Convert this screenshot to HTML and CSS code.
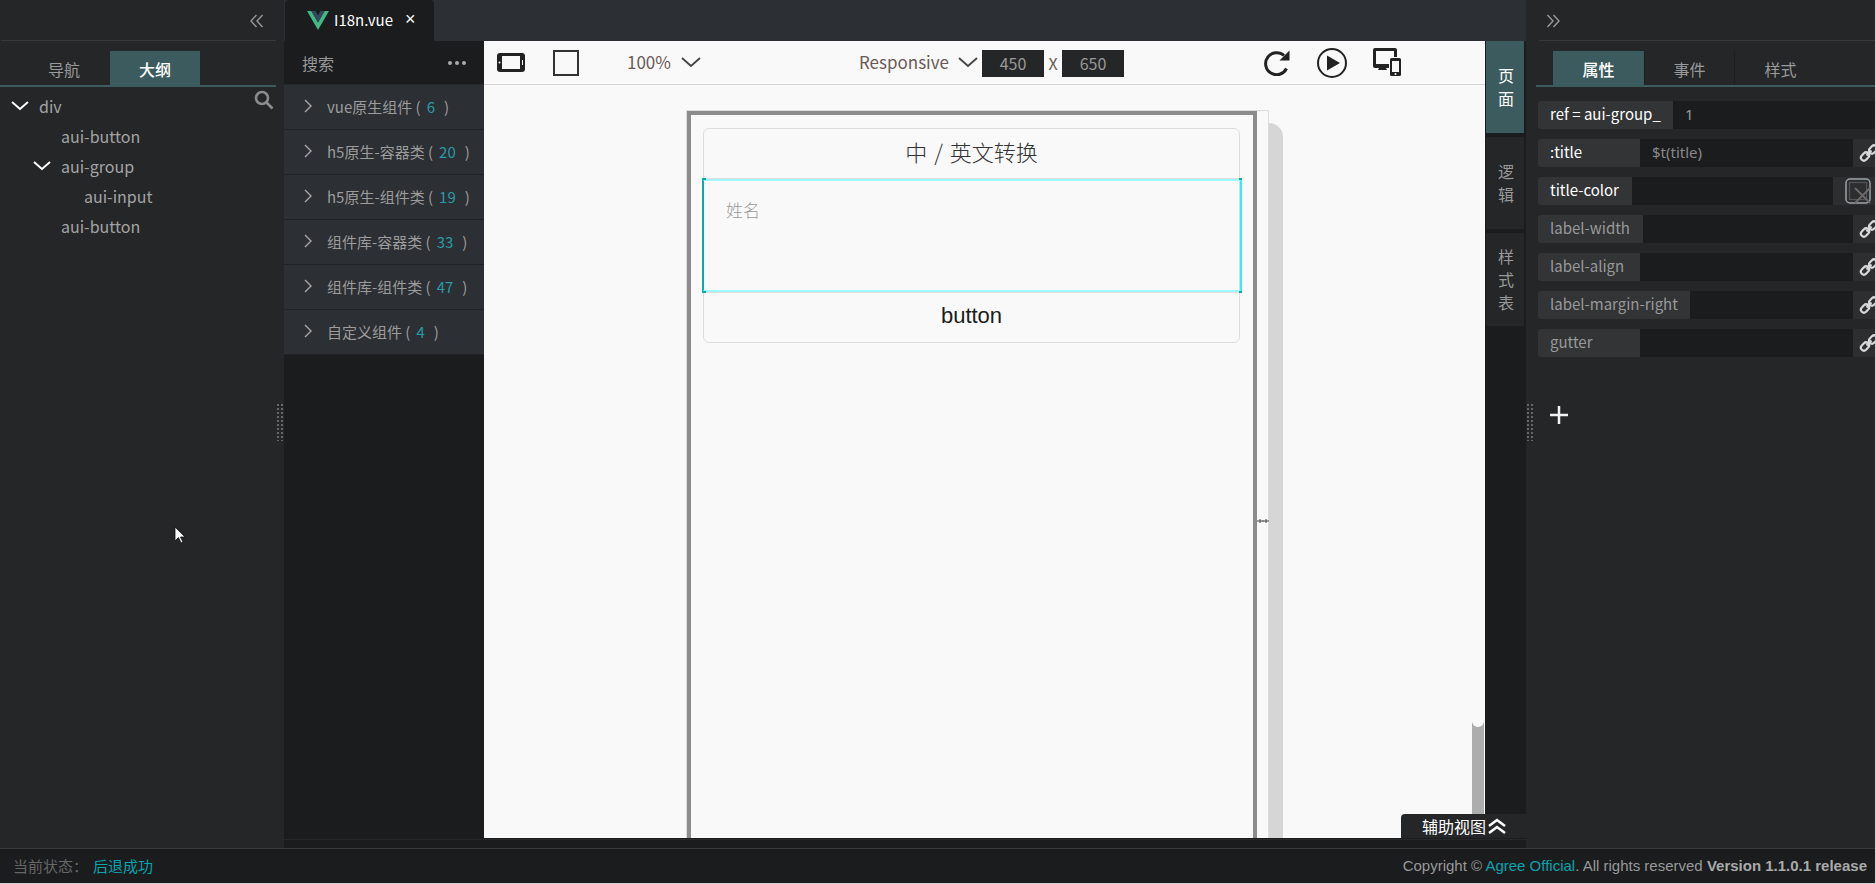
FILE: index.html
```html
<!DOCTYPE html>
<html lang="zh">
<head>
<meta charset="utf-8">
<title>I18n.vue</title>
<link rel="stylesheet" href="styles.css">
</head>
<body>
<div class="app">
  <div class="workspace">
    <aside class="left">
      <div class="panel-head"><svg class="collapse" viewBox="0 0 14 14"><path d="M6.5 1 1 7l5.500 6M12.500 1 7 7l5.500 6"/></svg></div>
      <div class="tabs">
        <div class="tab first">导航</div>
        <div class="tab active">大纲</div>
      </div>
      <div class="tree">
        <svg class="search" viewBox="0 0 20 20"><circle cx="8" cy="8" r="6"/><path d="m12.500 12.500 6 6"/></svg>
        <div class="node lvl0"><svg class="caret" viewBox="0 0 18 10"><path d="m1 1 8 7 8-7"/></svg>div</div>
        <div class="node lvl1">aui-button</div>
        <div class="node lvl1b"><svg class="caret" viewBox="0 0 18 10"><path d="m1 1 8 7 8-7"/></svg>aui-group</div>
        <div class="node lvl2">aui-input</div>
        <div class="node lvl1">aui-button</div>
      </div>
      <div class="grip"></div>
      <svg class="cursor" viewBox="0 0 12 18"><path d="M1 1v14l3.500-3.500 2.500 5.500 2-1-2.500-5H11Z"/></svg>
    </aside>

    <main class="center">
      <div class="tabbar">
        <div class="filetab">
          <svg class="vue" viewBox="0 0 256 221"><path fill="#41b883" d="M0 0l128 220.800L256 0h-51.200L128 132.480 50.560 0H0Z"/><path fill="#35495e" d="M50.560 0 128 133.120 204.800 0h-47.360L128 51.200 97.920 0H50.560Z"/></svg>
          <span class="filename">I18n.vue</span>
          <span class="close">×</span>
        </div>
      </div>
      <div class="body">
        <section class="library">
          <div class="lib-search"><span>搜索</span><span class="dots"><i></i><i></i><i></i></span></div>
          <div class="lib-row"><svg class="chev" viewBox="0 0 8 14"><path d="m1 1 6 6-6 6"/></svg><span class="lib-name">vue原生组件 (</span><b>6</b><span>)</span></div>
          <div class="lib-row"><svg class="chev" viewBox="0 0 8 14"><path d="m1 1 6 6-6 6"/></svg><span class="lib-name">h5原生-容器类 (</span><b>20</b><span>)</span></div>
          <div class="lib-row"><svg class="chev" viewBox="0 0 8 14"><path d="m1 1 6 6-6 6"/></svg><span class="lib-name">h5原生-组件类 (</span><b>19</b><span>)</span></div>
          <div class="lib-row"><svg class="chev" viewBox="0 0 8 14"><path d="m1 1 6 6-6 6"/></svg><span class="lib-name">组件库-容器类 (</span><b>33</b><span>)</span></div>
          <div class="lib-row"><svg class="chev" viewBox="0 0 8 14"><path d="m1 1 6 6-6 6"/></svg><span class="lib-name">组件库-组件类 (</span><b>47</b><span>)</span></div>
          <div class="lib-row"><svg class="chev" viewBox="0 0 8 14"><path d="m1 1 6 6-6 6"/></svg><span class="lib-name">自定义组件 (</span><b>4</b><span>)</span></div>
        </section>

        <section class="canvas">
          <div class="toolbar">
            <svg class="t-tablet" viewBox="0 0 28 19"><rect x="0" y="0" width="28" height="19" rx="3" fill="#222"/><rect x="5" y="3" width="18" height="13" fill="#f9f9f9"/><circle cx="2.500" cy="9.500" r="1" fill="#f9f9f9"/><rect x="25" y="7" width="1" height="5" fill="#f9f9f9"/></svg>
            <span class="t-square"></span>
            <span class="t-zoom">100%</span>
            <svg class="t-caret z" viewBox="0 0 20 11"><path d="m1 1 9 8 9-8"/></svg>
            <span class="t-resp">Responsive</span>
            <svg class="t-caret r" viewBox="0 0 20 11"><path d="m1 1 9 8 9-8"/></svg>
            <span class="t-size">450</span>
            <span class="t-x">X</span>
            <span class="t-size">650</span>
            <svg class="t-refresh" viewBox="0 0 26 27"><path class="ic" d="M22.500 19.500A11 11 0 1 1 20 6.500"/><path d="M25.500 1.500v10h-10Z" fill="#222"/></svg>
            <svg class="t-play" viewBox="0 0 30 30"><ellipse class="ic thin" cx="15" cy="15" rx="14" ry="14"/><path d="M10 7.500 23 15l-13 7.500Z" fill="#222"/></svg>
            <svg class="t-device" viewBox="0 0 28 28"><path d="M2 0h20a2 2 0 0 1 2 2v7h-3V3H3v13h13v4h-3l1 2H5l1-2H2a2 2 0 0 1-2-2V2a2 2 0 0 1 2-2Z" fill="#222"/><rect x="17" y="10" width="11" height="18" rx="1.500" fill="#222"/><rect x="19" y="13" width="7" height="11" fill="#f9f9f9"/><circle cx="22.500" cy="26" r="1" fill="#f9f9f9"/></svg>
          </div>
          <div class="stage">
            <div class="frame">
              <div class="device">
                <div class="card">
                  <div class="card-title">中 / 英文转换</div>
                  <div class="selected"><span class="placeholder">姓名</span></div>
                  <div class="card-btn">button</div>
                </div>
              </div>
              <div class="handle"><svg viewBox="0 0 12 6"><path d="M0 3h12M3 1v4M9 1v4M5.500 3h1"/></svg></div>
            </div>
            <div class="frame-shadow"></div>
            <div class="scroll-thumb"></div>
          </div>
        </section>

        <nav class="sidetabs">
          <div class="side active"><span>页</span><span>面</span></div>
          <div class="side"><span>逻</span><span>辑</span></div>
          <div class="side"><span>样</span><span>式</span><span>表</span></div>
        </nav>
        <div class="aux">辅助视图<svg viewBox="0 0 20 16"><path d="m2 8 8-6 8 6M2 15l8-6 8 6"/></svg></div>
      </div>
      <div class="strip"></div>
    </main>

    <aside class="right">
      <div class="panel-head rh"><svg class="collapse" viewBox="0 0 14 14"><path d="m1.500 1 5.500 6-5.500 6M7.500 1 13 7l-5.500 6"/></svg></div>
      <div class="tabs rtabs">
        <div class="tab active">属性</div>
        <div class="tab sep">事件</div>
        <div class="tab">样式</div>
      </div>
      <div class="props">
        <div class="prop on"><label class="w135">ref = aui-group_</label><span class="val">1</span></div>
        <div class="prop on"><label class="w102">:title</label><span class="val dim">$t(title)</span><span class="link"><svg viewBox="0 0 20 20"><use href="#chain"/></svg></span></div>
        <div class="prop on"><label class="w94">title-color</label><span class="val"></span><span class="picker"><svg viewBox="0 0 26 26"><rect x="1" y="1" width="24" height="24" rx="4" fill="none" stroke="#9aa4a8" stroke-width="1.500"/><rect x="4.500" y="4.500" width="17" height="17" fill="none" stroke="#555" stroke-width="1.200"/><path d="m10 10 15 15M25 10 10 25" fill="none" stroke="#6a6a6a" stroke-width="1.800"/></svg></span></div>
        <div class="prop"><label class="w105">label-width</label><span class="val"></span><span class="link"><svg viewBox="0 0 20 20"><use href="#chain"/></svg></span></div>
        <div class="prop"><label class="w102">label-align</label><span class="val"></span><span class="link"><svg viewBox="0 0 20 20"><use href="#chain"/></svg></span></div>
        <div class="prop"><label class="w152">label-margin-right</label><span class="val"></span><span class="link"><svg viewBox="0 0 20 20"><use href="#chain"/></svg></span></div>
        <div class="prop"><label class="w102">gutter</label><span class="val"></span><span class="link"><svg viewBox="0 0 20 20"><use href="#chain"/></svg></span></div>
      </div>
      <svg class="plus" viewBox="0 0 18 18"><path d="M0 9h18M9 0v18"/></svg>
      <div class="grip"></div>
    </aside>
  </div>
  <footer class="status">
    <div class="st-left">当前状态：<em>后退成功</em></div>
    <div class="st-right">Copyright © <a>Agree Official</a>. All rights reserved <strong>Version 1.1.0.1 release</strong></div>
  </footer>
</div>
<svg class="defs" width="0" height="0"><defs><g id="chain" fill="none" stroke="#d8d8d8" stroke-width="2.200"><rect x="1.500" y="10.500" width="9" height="6" rx="3" transform="rotate(-45 6 13.500)"/><rect x="9.500" y="3.500" width="9" height="6" rx="3" transform="rotate(-45 14 6.500)"/><path d="m7.500 12.500 5-5"/></g></defs></svg>
</body>
</html>
```
FILE: styles.css
```css
* { box-sizing: border-box; }
html, body { margin: 0; height: 100%; overflow: hidden; }
body { background: #d0d0d0; font-family: "Noto Sans CJK SC", "Noto Sans", sans-serif; font-size: 16px; color: #aaa; }
.defs { position: absolute; }
.app { width: 1875px; height: 883px; display: flex; flex-direction: column; }
.workspace { flex: 1; display: flex; min-height: 0; }

/* side panels */
.left, .right { position: relative; background: #242628; flex: none; }
.left { width: 284px; }
.right { width: 349px; overflow: hidden; }
.panel-head { height: 41px; margin: 0 8px 0 1px; padding-top: 2px; border-bottom: 1px solid #37393b; display: flex; align-items: center; justify-content: flex-end; }
.panel-head.rh { margin: 0 0 0 13px; justify-content: flex-start; padding-left: 7px; }
.collapse { width: 14px; height: 14px; margin-right: 12px; fill: none; stroke: #999; stroke-width: 1.400; }
.tabs { margin: 10px 8px 0 0; height: 36px; display: flex; border-bottom: 2px solid #3c5b5e; line-height: 36px; }
.tab { width: 110px; text-align: center; color: #999; }
.tab.first { padding-left: 18px; }
.tab + .tab.active { width: 90px; }
.tab.active { background: #3c5b5e; color: #fff; font-weight: 500; }
.rtabs { margin: 10px 0 0 10px; padding-left: 17px; }
.rtabs .tab { width: 91px; }
.rtabs .tab.sep { border-right: 1px solid #1c1e20; border-left: 1px solid #1c1e20; }

.tree { position: relative; padding-top: 4px; }
.search { position: absolute; right: 10px; top: 3px; width: 20px; height: 20px; fill: none; stroke: #8c8c8c; stroke-width: 2.600; }
.node { height: 30px; line-height: 30px; color: #a4a4a4; display: flex; align-items: center; white-space: nowrap; }
.lvl0 { padding-left: 11px; }
.lvl1 { padding-left: 61px; }
.lvl1b { padding-left: 33px; }
.lvl2 { padding-left: 84px; }
.caret { width: 18px; height: 10px; margin-right: 10px; fill: none; stroke: #fff; stroke-width: 2; }
.grip { position: absolute; right: 1px; top: 404px; width: 6px; height: 37px; background: repeating-linear-gradient(#666 0 2px, transparent 2px 4px) 0 0 / 2px 100% no-repeat, repeating-linear-gradient(#666 0 2px, transparent 2px 4px) 4px 0 / 2px 100% no-repeat; }
.right .grip { right: auto; left: 1px; }
.cursor { position: absolute; left: 174px; top: 526px; width: 12px; height: 18px; fill: #fff; stroke: #111; stroke-width: .8; }

/* center */
.center { flex: 1; display: flex; flex-direction: column; min-width: 0; background: #1a1c1e; }
.tabbar { height: 41px; background: #2c2f33; padding-left: 1px; flex: none; }
.filetab { width: 149px; height: 41px; background: #1a1c1e; border-radius: 4px 4px 0 0; display: flex; align-items: center; padding: 0 0 2px 22px; color: #fff; font-size: 15px; }
.vue { width: 22px; height: 19px; margin-top: 2px; }
.filename { margin-left: 5px; }
.close { margin-left: 12px; font-size: 18px; font-family: "Liberation Sans", sans-serif; }
.body { flex: 1; display: flex; min-height: 0; position: relative; }
.strip { height: 9px; flex: none; background: #1a1c1e; border-top: 1px solid #26282a; margin-top: 1px; }

.library { width: 200px; flex: none; background: #1a1c1e; }
.lib-search { height: 44px; padding: 0 18px 0 18px; display: flex; align-items: center; justify-content: space-between; color: #999; border-bottom: 1px solid #26282a; }
.dots { display: flex; gap: 3px; }
.dots i { width: 4px; height: 4px; border-radius: 50%; background: #aaa; }
.lib-row { height: 45px; background: #2c2f33; border-bottom: 1px solid #202225; display: flex; align-items: center; padding: 0 0 2px 20px; font-size: 15px; color: #9c9c9c; white-space: nowrap; }
.chev { width: 8px; height: 14px; margin-right: 15px; fill: none; stroke: #a8a8a8; stroke-width: 1.400; flex: none; }
.lib-row b { color: #2a9aa6; font-weight: 400; margin: 0 9px 0 6px; }

/* canvas */
.canvas { width: 1001px; flex: none; background: #f9f9f9; display: flex; flex-direction: column; position: relative; min-height: 0; }
.toolbar { height: 44px; flex: none; border-bottom: 1px solid #d6d6d6; display: flex; align-items: center; padding-left: 13px; color: #6b5a55; }
.t-tablet { width: 28px; height: 19px; flex: none; }
.t-square { width: 26px; height: 26px; border: 2px solid #333; margin-left: 28px; flex: none; }
.t-zoom { margin: -2px 0 0 48px; font-size: 17px; }
.t-caret { width: 20px; height: 11px; fill: none; stroke: #444; stroke-width: 1.800; flex: none; }
.t-caret.z { margin-left: 10px; }
.t-resp { margin: -2px 0 0 158px; font-size: 17px; }
.t-caret.r { margin-left: 9px; margin-right: 4px; }
.t-size { width: 62px; height: 27px; margin-top: 2px; background: #242628; color: #999; font-size: 16px; line-height: 27px; text-align: center; }
.t-x { width: 18px; text-align: center; font-size: 16px; }
.t-refresh { width: 26px; height: 27px; margin-left: 140px; }
.t-play { width: 30px; height: 30px; margin-left: 27px; }
.t-device { width: 28px; height: 28px; margin-left: 26px; margin-top: -2px; }
.ic { fill: none; stroke: #222; stroke-width: 3; }
.ic.thin { stroke-width: 2; }

.stage { flex: 1; position: relative; overflow: hidden; display: flex; align-items: flex-start; padding: 25px 0 0 202px; min-height: 0; }
.frame { width: 583px; height: 900px; flex: none; border: 1px solid #ddd; display: flex; }
.device { width: 570px; height: 100%; border: 4px solid #8c8c8c; padding: 13px 13px 0 12px; background: #f9f9f9; flex: none; }
.handle { flex: 1; display: flex; justify-content: center; padding-top: 407px; }
.handle svg { width: 12px; height: 6px; fill: none; stroke: #444; stroke-width: 1; }
.frame-shadow { width: 14px; height: 900px; margin-top: 13px; background: #d6d6d6; border-top-right-radius: 14px; flex: none; }
.card { width: 537px; height: 215px; border: 1px solid #ddd; border-radius: 6px; display: flex; flex-direction: column; }
.card-title { height: 50px; flex: none; text-align: center; font-size: 22px; line-height: 44px; color: #333; font-weight: 300; word-spacing: 2px; }
.selected { position: relative; height: 113px; margin: 0 -3px 0 -2px; flex: none; border: 2px solid #9ff8fb; border-left-color: #09a9ac; border-right-color: #2ff0f5; box-shadow: 0 -1px 0 #ddd, 0 1px 0 #ddd; padding: 16px 0 0 22px; font-weight: 300; }
.selected::before, .selected::after { content: ""; position: absolute; left: -2px; right: -2px; height: 2px; background: linear-gradient(#09a9ac, #09a9ac) 0 0 / 4px 100% no-repeat, linear-gradient(#09a9ac, #09a9ac) 100% 0 / 3px 100% no-repeat; }
.selected::before { top: -3px; }
.selected::after { bottom: -3px; }
.placeholder { color: #999; font-size: 17px; line-height: 26px; }
.card-btn { flex: 1; text-align: center; font-family: "Liberation Sans", sans-serif; font-size: 22px; line-height: 48px; color: #1c1c1c; }
.scroll-thumb { position: absolute; right: 1px; top: 0; bottom: 0; width: 12px; background: #adadad; }
.scroll-thumb::before { content: ""; display: block; height: 642px; background: #f9f9f9; border-radius: 0 0 6px 6px; }
.aux { position: absolute; right: 0; bottom: 0; width: 125px; height: 24px; background: #242628; border-radius: 4px 0 0 0; color: #fff; display: flex; align-items: center; padding-left: 21px; line-height: 24px; font-size: 16px; }
.aux svg { width: 20px; height: 16px; margin-left: 1px; fill: none; stroke: #fff; stroke-width: 2.500; flex: none; }

/* vertical tabs */
.sidetabs { width: 41px; flex: none; padding: 0 2px 0 1px; }
.side { height: 92px; background: #242628; margin-bottom: 4px; display: flex; flex-direction: column; align-items: center; justify-content: center; padding-left: 2px; color: #999; line-height: 23px; }
.side:nth-child(3) { height: 93px; }
.side.active { background: #3c5b5e; color: #fff; }

/* properties */
.props { padding: 14px 0 0 12px; display: flex; flex-direction: column; gap: 10px; }
.prop { height: 28px; display: flex; line-height: 26px; }
.prop label { flex: none; background: #323436; border-radius: 3px 0 0 3px; padding-left: 12px; color: #999; white-space: nowrap; font-size: 15px; }
.prop.on label { color: #fff; }
.w135 { width: 135px; } .w102 { width: 102px; } .w94 { width: 94px; } .w105 { width: 105px; } .w152 { width: 152px; }
.val { flex: 1; min-width: 0; background: #1a1c1e; color: #999; padding-left: 12px; font-size: 15px; font-family: "Noto Sans", sans-serif; }
.val.dim { color: #888; }
.link { width: 22px; flex: none; background: #2c2e30; padding: 4px 0 0 6px; overflow: hidden; }
.link svg { width: 20px; height: 20px; display: block; }
.picker { width: 42px; flex: none; background: #2c2e30; padding: 1px 0 0 12px; }
.picker svg { width: 26px; height: 26px; display: block; }
.plus { position: absolute; left: 24px; top: 406px; width: 18px; height: 18px; fill: none; stroke: #f2f2f2; stroke-width: 2.500; }

/* status bar */
.status { height: 35px; flex: none; background: #1a1c1e; border-top: 1px solid #37393b; display: flex; align-items: center; justify-content: space-between; padding: 0 8px 2px 13px; }
.st-left { color: #666; font-size: 15px; }
.st-left em { font-style: normal; color: #0aa4ad; margin-left: 5px; }
.st-right { font-family: "Liberation Sans", sans-serif; font-size: 15px; color: #999; }
.st-right a { color: #0aa4ad; }
.st-right strong { color: #aaa; }
```
